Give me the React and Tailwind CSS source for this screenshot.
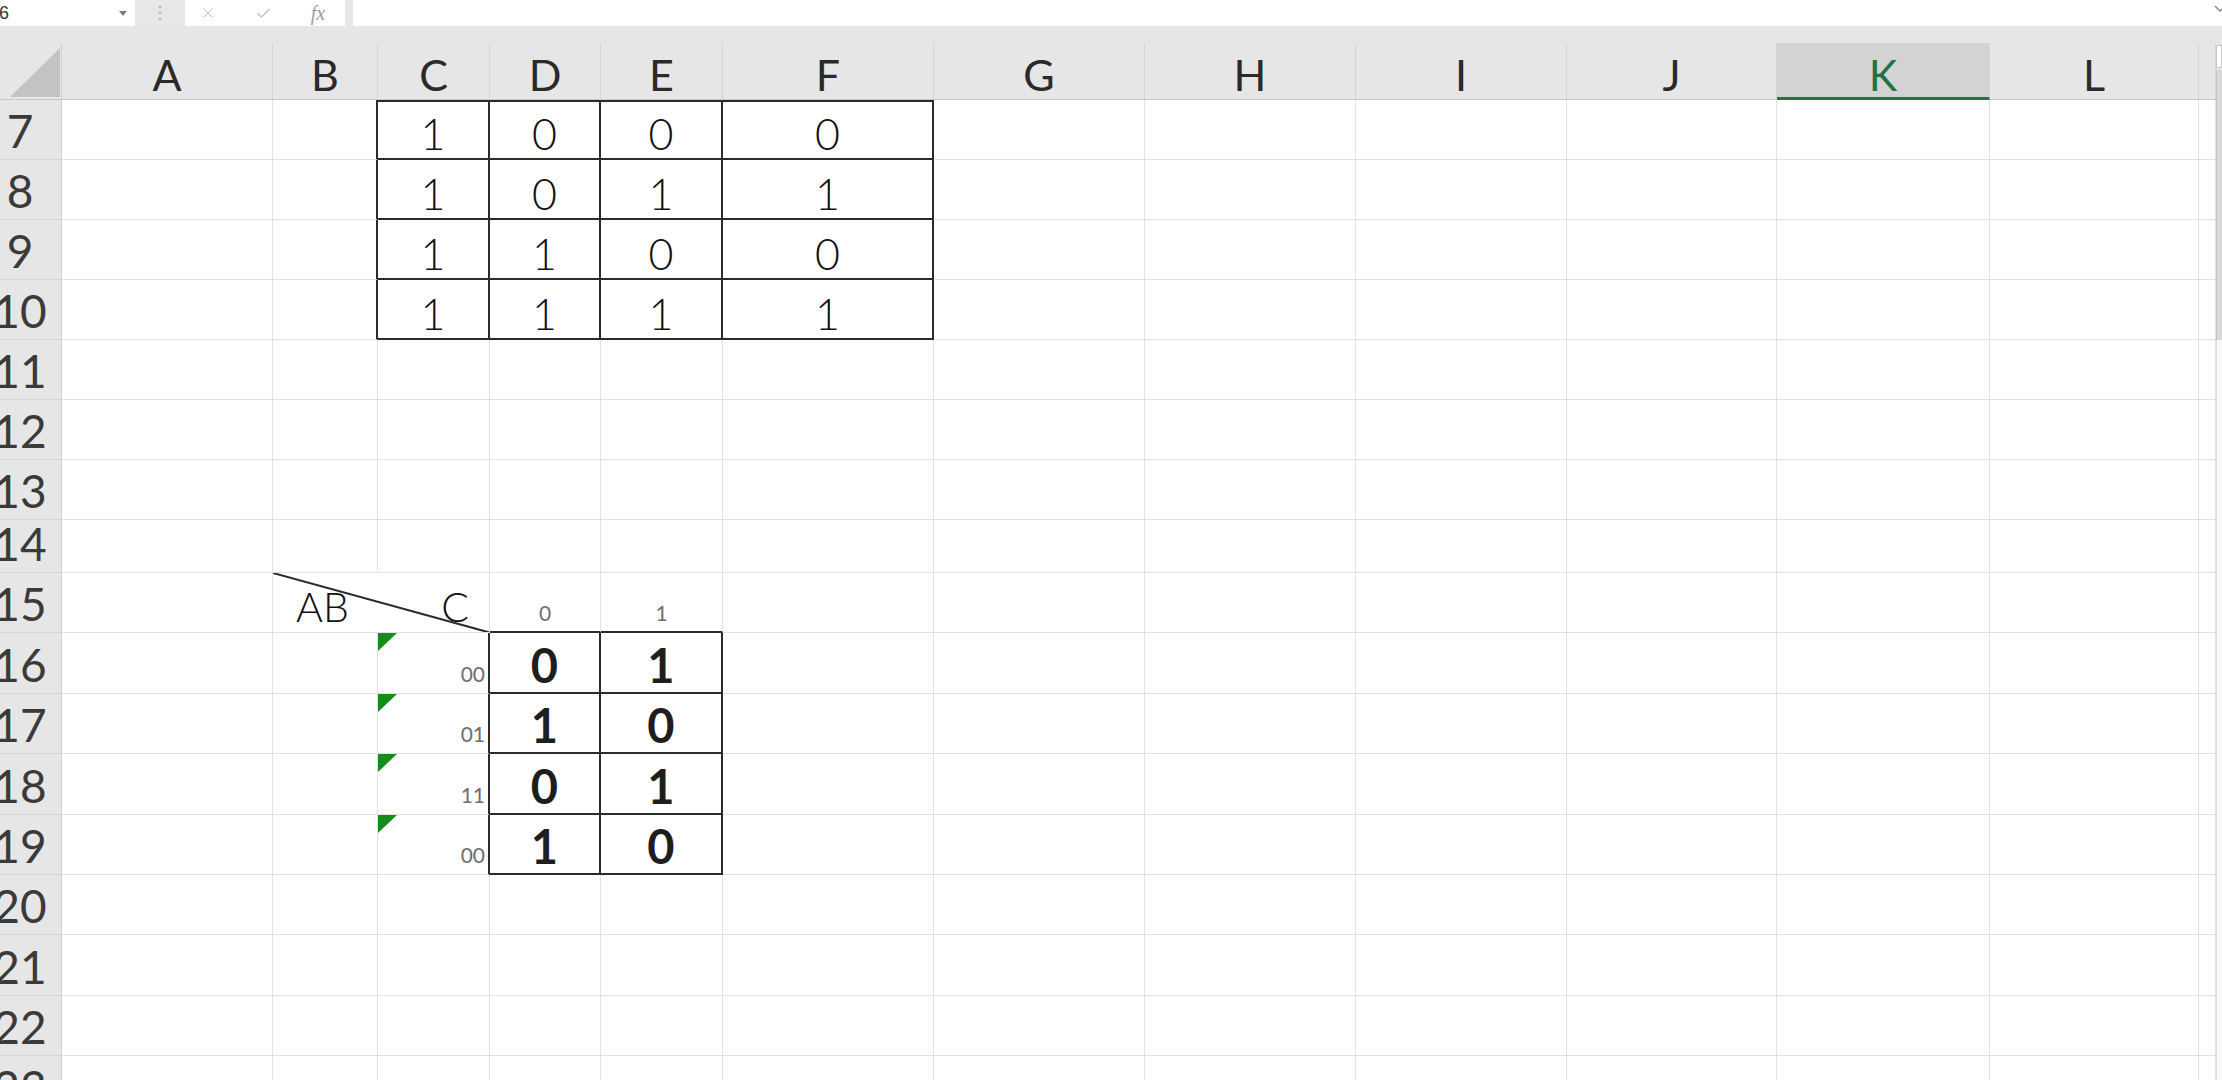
import React from "react";
import { X, Check } from "lucide-react";

const LETTERS = ["A", "B", "C", "D", "E", "F", "G", "H", "I", "J", "K", "L", "M"];

const colW = {
  A: "w-[211px]",
  B: "w-[105px]",
  C: "w-[112px]",
  D: "w-[111px]",
  E: "w-[122px]",
  F: "w-[211px]",
  G: "w-[211px]",
  H: "w-[211px]",
  I: "w-[211px]",
  J: "w-[210px]",
  K: "w-[213px]",
  L: "w-[209px]",
  M: "w-[17px]",
};

const ROWS = [
  { n: 7, h: "h-[60px]" },
  { n: 8, h: "h-[60px]" },
  { n: 9, h: "h-[60px]" },
  { n: 10, h: "h-[60px]" },
  { n: 11, h: "h-[60px]" },
  { n: 12, h: "h-[60px]" },
  { n: 13, h: "h-[60px]" },
  { n: 14, h: "h-[53px]" },
  { n: 15, h: "h-[60.4px]" },
  { n: 16, h: "h-[60.4px]" },
  { n: 17, h: "h-[60.4px]" },
  { n: 18, h: "h-[60.4px]" },
  { n: 19, h: "h-[60.4px]" },
  { n: 20, h: "h-[60.4px]" },
  { n: 21, h: "h-[60.4px]" },
  { n: 22, h: "h-[60.4px]" },
  { n: 23, h: "h-[60px]" },
];

// truth table C7:F10
const truth = {
  7: ["1", "0", "0", "0"],
  8: ["1", "0", "1", "1"],
  9: ["1", "1", "0", "0"],
  10: ["1", "1", "1", "1"],
};

// k-map rows: label in C, values in D and E
const kmap = {
  16: ["00", "0", "1"],
  17: ["01", "1", "0"],
  18: ["11", "0", "1"],
  19: ["00", "1", "0"],
};

const grid = "border-r border-b border-[#e2e2e2]";

function renderCells(n) {
  const out = [];
  const t = truth[n];
  const k = kmap[n];
  for (const col of LETTERS) {
    const w = colW[col];

    if (t && col === "B") {
      out.push(
        <div key={col} className={`${w} shrink-0 border-b border-b-[#e2e2e2] border-r-2 border-r-[#2b2b2b]`} />
      );
      continue;
    }
    if (t && "CDEF".includes(col)) {
      const v = t["CDEF".indexOf(col)];
      out.push(
        <div
          key={col}
          className={`${w} shrink-0 flex items-end justify-center pb-[3px] border-r-2 border-b-2 border-[#2b2b2b] ${n === 7 ? "border-t-2" : ""} text-[43px] leading-none font-light text-[#111]`}
        >
          {v}
        </div>
      );
      continue;
    }

    if (n === 15 && col === "B") {
      // merged B15:C15 with diagonal border
      out.push(
        <div
          key="BC"
          className="w-[217px] shrink-0 relative flex items-end justify-between pl-[23px] pr-[20px] pb-[5px] border-r border-b border-[#e2e2e2] text-[41px] leading-none font-light text-[#111]"
        >
          <svg className="absolute inset-0 w-full h-full" viewBox="0 0 216 59" preserveAspectRatio="none">
            <line x1="0" y1="0" x2="216" y2="59" stroke="#2b2b2b" strokeWidth="2" />
          </svg>
          <span className="relative">AB</span>
          <span className="relative">C</span>
        </div>
      );
      continue;
    }
    if (n === 15 && col === "C") continue;
    if (n === 15 && (col === "D" || col === "E")) {
      out.push(
        <div
          key={col}
          className={`${w} shrink-0 flex items-end justify-center pb-[8px] border-r border-r-[#e2e2e2] border-b-2 border-b-[#2b2b2b] text-[21px] leading-none text-[#6e6e6e]`}
        >
          {col === "D" ? "0" : "1"}
        </div>
      );
      continue;
    }

    if (k && col === "C") {
      out.push(
        <div
          key={col}
          className={`${w} shrink-0 relative flex items-end justify-end pr-[3px] pb-[9px] border-b border-b-[#e2e2e2] border-r-2 border-r-[#2b2b2b] text-[21px] leading-none text-[#6e6e6e]`}
        >
          <svg className="absolute top-0 left-0" width="19" height="18" viewBox="0 0 19 18">
            <polygon points="0,0 19,0 0,18" fill="#178c17" />
          </svg>
          {k[0]}
        </div>
      );
      continue;
    }
    if (k && (col === "D" || col === "E")) {
      out.push(
        <div
          key={col}
          className={`${w} shrink-0 flex items-end justify-center pb-[3px] border-r-2 border-b-2 border-[#2b2b2b] text-[47px] leading-none font-bold text-[#1e1e1e]`}
        >
          {col === "D" ? k[1] : k[2]}
        </div>
      );
      continue;
    }

    out.push(<div key={col} className={`${w} shrink-0 ${grid}`} />);
  }
  return out;
}

function FormulaBar() {
  return (
    <div className="flex h-[26px] bg-[#e7e7e7]">
      <div className="w-[135px] shrink-0 bg-white flex items-center">
        <span className="-ml-[1px] text-[18px] leading-none text-[#333] font-['Liberation_Sans',sans-serif]">6</span>
        <svg className="ml-auto mr-[8px]" width="8" height="5" viewBox="0 0 8 5">
          <polygon points="0,0 8,0 4,5" fill="#7a7a7a" />
        </svg>
      </div>
      <div className="w-[50px] shrink-0 flex items-center justify-center">
        <svg width="4" height="18" viewBox="0 0 4 18">
          <circle cx="2" cy="3" r="1.2" fill="#b3b3b3" />
          <circle cx="2" cy="9" r="1.2" fill="#b3b3b3" />
          <circle cx="2" cy="15" r="1.2" fill="#b3b3b3" />
        </svg>
      </div>
      <div className="w-[160px] shrink-0 bg-white flex items-center">
        <div className="w-[46px] flex justify-center">
          <X size={16} strokeWidth={1.5} color="#b8b8b8" />
        </div>
        <div className="w-[64px] flex justify-center">
          <Check size={17} strokeWidth={1.5} color="#b8b8b8" />
        </div>
        <div className="w-[46px] flex justify-center">
          <span className="text-[20px] leading-none italic text-[#9c9c9c] font-['Liberation_Serif',serif]">fx</span>
        </div>
      </div>
      <div className="w-[8px] shrink-0" />
      <div className="flex-1 bg-white flex items-start justify-end">
        <svg className="mt-[5px] -mr-[4px]" width="12" height="7" viewBox="0 0 12 7">
          <polyline points="1,1 6,6 11,1" fill="none" stroke="#8a8a8a" strokeWidth="1.5" />
        </svg>
      </div>
    </div>
  );
}

export default function App() {
  return (
    <div className="w-[2222px] h-[1080px] overflow-hidden bg-white font-[Lato,'Noto_Sans',sans-serif]">
      <FormulaBar />
      <div className="h-[17px] bg-[#e6e6e6]" />
      <div className="flex">
        <div className="w-[2216px] shrink-0">
          {/* column headers */}
          <div className="flex h-[57px] bg-[#e6e6e6]">
            <div className="w-[62px] shrink-0 flex items-end justify-end pr-[1px] pb-[2px] border-r border-r-[#cfcfcf] border-b border-b-[#c8c8c8]">
              <svg width="50" height="49" viewBox="0 0 50 49">
                <polygon points="50,0 50,49 0,49" fill="#c3c3c3" />
              </svg>
            </div>
            {LETTERS.map((c) =>
              c === "K" ? (
                <div
                  key={c}
                  className={`${colW[c]} shrink-0 flex items-end justify-center pb-[1px] bg-[#d3d3d3] border-r border-r-[#d5d5d5] border-b-[3px] border-b-[#217346] text-[43px] leading-none text-[#217346]`}
                >
                  {c}
                </div>
              ) : (
                <div
                  key={c}
                  className={`${colW[c]} shrink-0 overflow-hidden flex items-end justify-center pb-[3px] border-r border-r-[#d5d5d5] border-b border-b-[#c8c8c8] text-[43px] leading-none text-[#2a2a2a]`}
                >
                  {c === "M" ? "" : c}
                </div>
              )
            )}
          </div>

          {/* rows */}
          {ROWS.map((r) => (
            <div key={r.n} className={`flex ${r.h}`}>
              <div className="w-[62px] shrink-0 overflow-hidden flex items-end bg-[#e6e6e6] border-r border-r-[#cfcfcf] border-b border-b-[#d6d6d6]">
                <span className="block w-[84px] shrink-0 -ml-[22px] text-center pb-[5px] text-[46px] leading-none text-[#3a3a3a]">
                  {r.n}
                </span>
              </div>
              {renderCells(r.n)}
            </div>
          ))}
        </div>

        {/* vertical scrollbar */}
        <div className="w-[6px] shrink-0 flex flex-col bg-[#e6e6e6]">
          <div className="h-[2px]" />
          <div className="h-[23px] bg-white border border-[#c8c8c8]" />
          <div className="h-[2px]" />
          <div className="h-[270px] bg-[#dadada] border-l border-l-[#c4c4c4]" />
          <div className="flex-1 bg-[#f7f7f7] border-l border-l-[#e2e2e2]" />
        </div>
      </div>
    </div>
  );
}
